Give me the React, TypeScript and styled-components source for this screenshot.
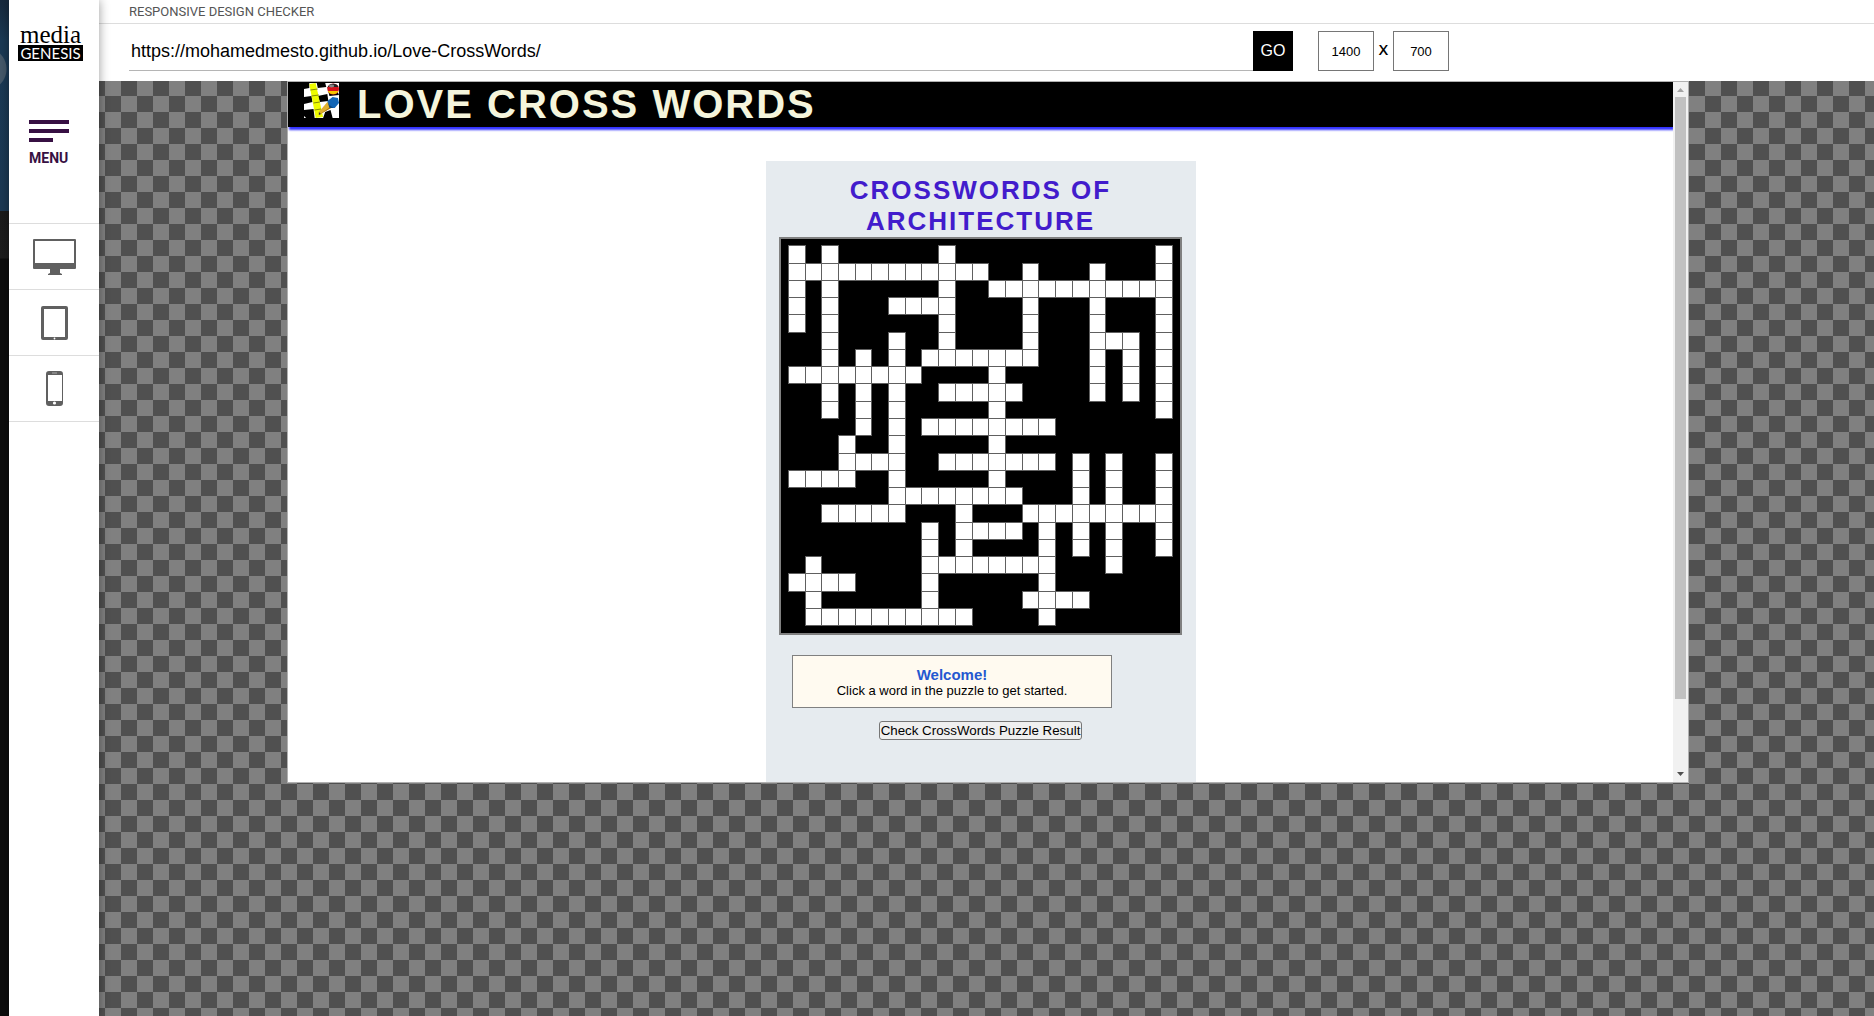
import React, { useState } from "react";
import styled, { createGlobalStyle } from "styled-components";

const GlobalStyle = createGlobalStyle`
  * { box-sizing: border-box; }
  body { margin: 0; font-family: "Liberation Sans", Arial, sans-serif; color: #000; }
  button, input { font-family: inherit; margin: 0; }
`;

const Shell = styled.div`
  display: flex;
  min-height: 100vh;
`;

const Edge = styled.div`
  flex: 0 0 9px;
  background:
    radial-gradient(circle at -15px 69px, #46596a 21px, transparent 22px),
    linear-gradient(#17293d 0, #1b3a55 40px, #1c3954 211px, #1b1b1b 211px, #1d1d1d 258px, #0d0d0d 259px);
`;

const Sidebar = styled.aside`
  position: relative;
  z-index: 1;
  flex: 0 0 90px;
  display: flex;
  flex-direction: column;
  background: #fff;
  box-shadow: 0 0 10px rgba(0, 0, 0, 0.4);
`;

const Brand = styled.a`
  display: flex;
  flex-direction: column;
  align-items: center;
  width: 65px;
  margin: 24px 0 0 9px;
  color: #000;
  text-decoration: none;
`;

const BrandTop = styled.span`
  font: 25px/21px "Liberation Serif", "Times New Roman", serif;
`;

const BrandBottom = styled.span`
  align-self: stretch;
  background: #000;
  color: #fff;
  text-align: center;
  font: 15px/16px Lato, sans-serif;
`;

const MenuButton = styled.button`
  display: flex;
  flex-direction: column;
  align-items: flex-start;
  gap: 5px;
  height: 103px;
  margin: 59px 0 0 20px;
  padding: 0;
  border: 0;
  background: none;
  color: #371043;
  font: 700 14px/22px Roboto, sans-serif;
`;

const MenuLine = styled.span<{ $short?: boolean }>`
  width: ${(p) => (p.$short ? 24 : 40)}px;
  height: 4px;
  background: #371043;
`;

const Devices = styled.nav`
  display: flex;
  flex-direction: column;
  border-top: 1px solid #ddd;
`;

const Device = styled.button`
  display: flex;
  align-items: center;
  justify-content: center;
  height: 66px;
  padding: 0;
  border: 0;
  border-bottom: 1px solid #ddd;
  background: none;
`;

const Main = styled.main`
  flex: 1;
  min-width: 0;
  display: flex;
  flex-direction: column;
`;

const Title = styled.h1`
  height: 24px;
  margin: 0;
  padding-left: 30px;
  border-bottom: 1px solid #ddd;
  color: #555;
  font: 400 13px/23px Roboto, sans-serif;
`;

const Toolbar = styled.form`
  display: flex;
  height: 57px;
  padding: 7px 425px 10px 30px;
  background: #fff;
`;

const UrlInput = styled.input`
  flex: 1;
  min-width: 0;
  height: 40px;
  padding: 2px 2px 0;
  border: 0;
  border-bottom: 1px solid #b5b5b5;
  font-size: 18px;
`;

const GoButton = styled.button`
  width: 40px;
  height: 40px;
  padding: 0;
  border: 0;
  background: #000;
  color: #fff;
  font-size: 16px;
`;

const Sizes = styled.div`
  display: flex;
  align-items: center;
  margin-left: 25px;
`;

const SizeInput = styled.input`
  width: 56px;
  height: 40px;
  padding: 1px 0 0;
  border: 1px solid #767676;
  text-align: center;
  font-size: 13px;
`;

const Times = styled.span`
  width: 19px;
  padding-bottom: 3px;
  text-align: center;
  font: 600 15px/37px "Open Sans", sans-serif;
`;

const Stage = styled.section`
  flex: 1;
  padding-left: 3px;
  background: conic-gradient(#505050 25%, #808080 0 50%, #505050 0 75%, #808080 0) 6px -1px / 32px 32px;
`;

const Frame = styled.div`
  display: flex;
  max-width: 1402px;
  height: 702px;
  margin: 0 auto;
  border: 1px solid #b0b0b0;
  background: #fff;
  overflow: hidden;
`;

const Site = styled.div`
  flex: 1;
  min-width: 0;
  overflow: hidden;
`;

const SiteHeader = styled.header`
  display: flex;
  height: 45px;
  padding: 1px 16px;
  gap: 18px;
  background: #000;
  box-shadow: 1px 3px 2px #3333ff;
`;

const SiteTitle = styled.h2`
  margin: 0;
  color: beige;
  font-size: 40px;
  line-height: 42px;
  letter-spacing: 2px;
`;

const Panel = styled.section`
  display: flex;
  flex-direction: column;
  align-items: center;
  width: 430px;
  height: 660px;
  margin: 34px auto 0;
  padding: 14px 12px;
  background: #e6ebef;
`;

const PanelTitle = styled.h3`
  margin: 0;
  color: #421ccc;
  font-size: 26px;
  line-height: 31px;
  letter-spacing: 2px;
  text-align: center;
`;

const ROWS = [18, 17, 17, 17, 18, 17, 17, 17, 18, 17, 17, 18, 17, 17, 17, 18, 17, 17, 17, 18, 17, 17];
const COLS = [17, 16, 17, 17, 16, 17, 17, 16, 17, 17, 17, 16, 17, 17, 16, 17, 17, 17, 16, 17, 17, 16, 17];
const tracks = (sizes: number[]) => sizes.map((s) => `${s}px`).join(" ");

const Board = styled.div`
  display: grid;
  grid-template-rows: ${tracks(ROWS)};
  grid-template-columns: ${tracks(COLS)};
  padding: 6px 8px 8px 7px;
  border: 2px solid #808080;
  background: #000;
`;

const Cell = styled.span<{ $row: number; $col: number }>`
  grid-area: ${(p) => p.$row + 1} / ${(p) => p.$col + 1};
  margin: 0 -1px -1px 0;
  border: 1px solid #606060;
  background: #fff;
`;

const Welcome = styled.div`
  align-self: flex-start;
  width: 320px;
  height: 53px;
  margin: 20px 0 13px 14px;
  padding: 10px 10px 10px 11px;
  border: 1px solid #808080;
  background: #fffaf0;
  text-align: center;
  font-size: 13px;
  line-height: 15px;
`;

const WelcomeTitle = styled.strong`
  display: block;
  color: #2458d0;
  font-size: 15px;
  line-height: 17px;
`;

const CheckButton = styled.button`
  height: 19px;
  padding: 0 1px;
  border: 1px solid #767676;
  border-radius: 3px;
  background: #efefef;
  color: #000;
  line-height: 17px;
`;

const Scrollbar = styled.div`
  flex: 0 0 15px;
  display: flex;
  flex-direction: column;
  align-items: center;
  background: #f1f1f1;
`;

const Arrow = styled.svg`
  flex: 0 0 15px;
  width: 15px;
`;

const Track = styled.div`
  flex: 1;
`;

const Thumb = styled.div`
  width: 11px;
  height: 602px;
  background: #c1c1c1;
`;

// Every word as [row, column, length].
const ACROSS = [
  [1, 0, 12], [2, 12, 11], [3, 6, 4], [5, 18, 3], [6, 8, 7], [7, 0, 8], [8, 9, 5],
  [10, 8, 8], [12, 3, 4], [12, 9, 7], [13, 0, 4], [14, 6, 8], [15, 2, 5], [15, 14, 9],
  [16, 10, 4], [18, 8, 8], [19, 0, 4], [20, 14, 4], [21, 1, 10],
];
const DOWN = [
  [0, 0, 5], [0, 2, 10], [0, 9, 7], [0, 22, 10], [1, 14, 6], [1, 18, 8], [5, 20, 4],
  [5, 6, 11], [6, 4, 5], [6, 12, 9], [11, 3, 3], [12, 17, 6], [12, 19, 7], [12, 22, 6],
  [14, 10, 5], [15, 15, 7], [16, 8, 6], [18, 1, 4],
];

const cells = new Set<number>();
ACROSS.forEach(([r, c, n]) => {
  for (let i = 0; i < n; i++) cells.add(r * 23 + c + i);
});
DOWN.forEach(([r, c, n]) => {
  for (let i = 0; i < n; i++) cells.add((r + i) * 23 + c);
});
const CELLS = [...cells].sort((a, b) => a - b);

const SiteLogo = () => (
  <svg width="35" height="35" viewBox="0 0 33 35" preserveAspectRatio="none" aria-hidden="true">
    <path fill="#fff" d="M0 0h33v35H0z" />
    <path fill="#000" d="M0 0h5v5L0 6zM0 14l7-1 1 6-8 2zM0 27l9-1 1 9H2l-2-2zM12 0h8l1 4-8 1zM13 13l9-2 1 7-8 1zM22 4h8l3 8-9 1zM20 29l5-2 2 8h-9z" />
    <path fill="#eefc00" d="M5 1l6-1 7 34-7 1z" />
    <path stroke="#6d7500" strokeWidth=".8" d="M6 7l7-1M7 13l7-1M9 20l6-1M10 27l6-1" />
    <path fill="#e0b02e" d="M14 29l8-10 5 5-13 8z" />
    <path fill="#a67813" d="M14 32l12-9 1 1z" />
    <path fill="#333" d="M14 32l0-3 2 2z" />
    <path fill="#1265b5" d="M22 18l5-4 5 1 1 5-4 5-4 0z" />
    <path fill="#0d4780" d="M22 18l2 4 4 3-4 0z" />
    <circle cx="27.5" cy="6" r="5.5" fill="#d8121b" />
    <path fill="#222" d="M22.5 4a5.5 5.5 0 0 1 10 0z" />
    <path fill="#f5c400" d="M22.5 8a5.5 5.5 0 0 0 10 0z" />
    <ellipse cx="26" cy="3" rx="2.5" ry="1.4" fill="#888" />
  </svg>
);

export default function App() {
  const [url, setUrl] = useState("https://mohamedmesto.github.io/Love-CrossWords/");
  const [width, setWidth] = useState("1400");
  const [height, setHeight] = useState("700");
  return (
    <>
      <GlobalStyle />
      <Shell>
        <Edge />
        <Sidebar>
          <Brand href="#">
            <BrandTop>media</BrandTop>
            <BrandBottom>GENESIS</BrandBottom>
          </Brand>
          <MenuButton type="button">
            <MenuLine />
            <MenuLine />
            <MenuLine $short />
            MENU
          </MenuButton>
          <Devices>
            <Device type="button" aria-label="Desktop">
              <svg width="43" height="39" viewBox="0 -2 43 39" fill="#606060" aria-hidden="true">
                <path fillRule="evenodd" d="M1 0h41q1 0 1 1v28q0 1-1 1H27v4l2 1v1H15v-1l2-1v-4H1q-1 0-1-1V1q0-1 1-1zM2 2v22h39V2z" />
              </svg>
            </Device>
            <Device type="button" aria-label="Tablet">
              <svg width="27" height="34" viewBox="0 0 27 34" fill="#606060" aria-hidden="true">
                <path fillRule="evenodd" d="M2 0h23q2 0 2 2v30q0 2-2 2H2q-2 0-2-2V2q0-2 2-2zM3 3v28h21V3z" />
                <circle cx="13.5" cy="32.5" r=".9" fill="#fff" />
              </svg>
            </Device>
            <Device type="button" aria-label="Phone">
              <svg width="17" height="35" viewBox="0 0 17 35" fill="#606060" aria-hidden="true">
                <path fillRule="evenodd" d="M3 0h11q3 0 3 3v29q0 3-3 3H3q-3 0-3-3V3q0-3 3-3zM2 4v26h14V4z" />
                <path stroke="#aaa" d="M6 2h5" />
                <circle cx="8.5" cy="32" r="1.6" fill="#fff" />
              </svg>
            </Device>
          </Devices>
        </Sidebar>
        <Main>
          <Title>RESPONSIVE DESIGN CHECKER</Title>
          <Toolbar onSubmit={(e) => e.preventDefault()}>
            <UrlInput aria-label="Address" value={url} onChange={(e) => setUrl(e.target.value)} />
            <GoButton type="submit">GO</GoButton>
            <Sizes>
              <SizeInput aria-label="Width" value={width} onChange={(e) => setWidth(e.target.value)} />
              <Times>X</Times>
              <SizeInput aria-label="Height" value={height} onChange={(e) => setHeight(e.target.value)} />
            </Sizes>
          </Toolbar>
          <Stage>
            <Frame>
              <Site>
                <SiteHeader>
                  <SiteLogo />
                  <SiteTitle>LOVE CROSS WORDS</SiteTitle>
                </SiteHeader>
                <Panel>
                  <PanelTitle>CROSSWORDS OF ARCHITECTURE</PanelTitle>
                  <Board>
                    {CELLS.map((n) => (
                      <Cell key={n} $row={Math.floor(n / 23)} $col={n % 23} />
                    ))}
                  </Board>
                  <Welcome>
                    <WelcomeTitle>Welcome!</WelcomeTitle>
                    Click a word in the puzzle to get started.
                  </Welcome>
                  <CheckButton type="button">Check CrossWords Puzzle Result</CheckButton>
                </Panel>
              </Site>
              <Scrollbar>
                <Arrow viewBox="0 0 15 15" height="15" aria-hidden="true">
                  <path fill="#a3a3a3" d="M4 10l3.500-4 3.500 4z" />
                </Arrow>
                <Track>
                  <Thumb />
                </Track>
                <Arrow viewBox="0 0 15 15" height="15" aria-hidden="true">
                  <path fill="#505050" d="M4 5l3.500 4 3.500-4z" />
                </Arrow>
              </Scrollbar>
            </Frame>
          </Stage>
        </Main>
      </Shell>
    </>
  );
}
